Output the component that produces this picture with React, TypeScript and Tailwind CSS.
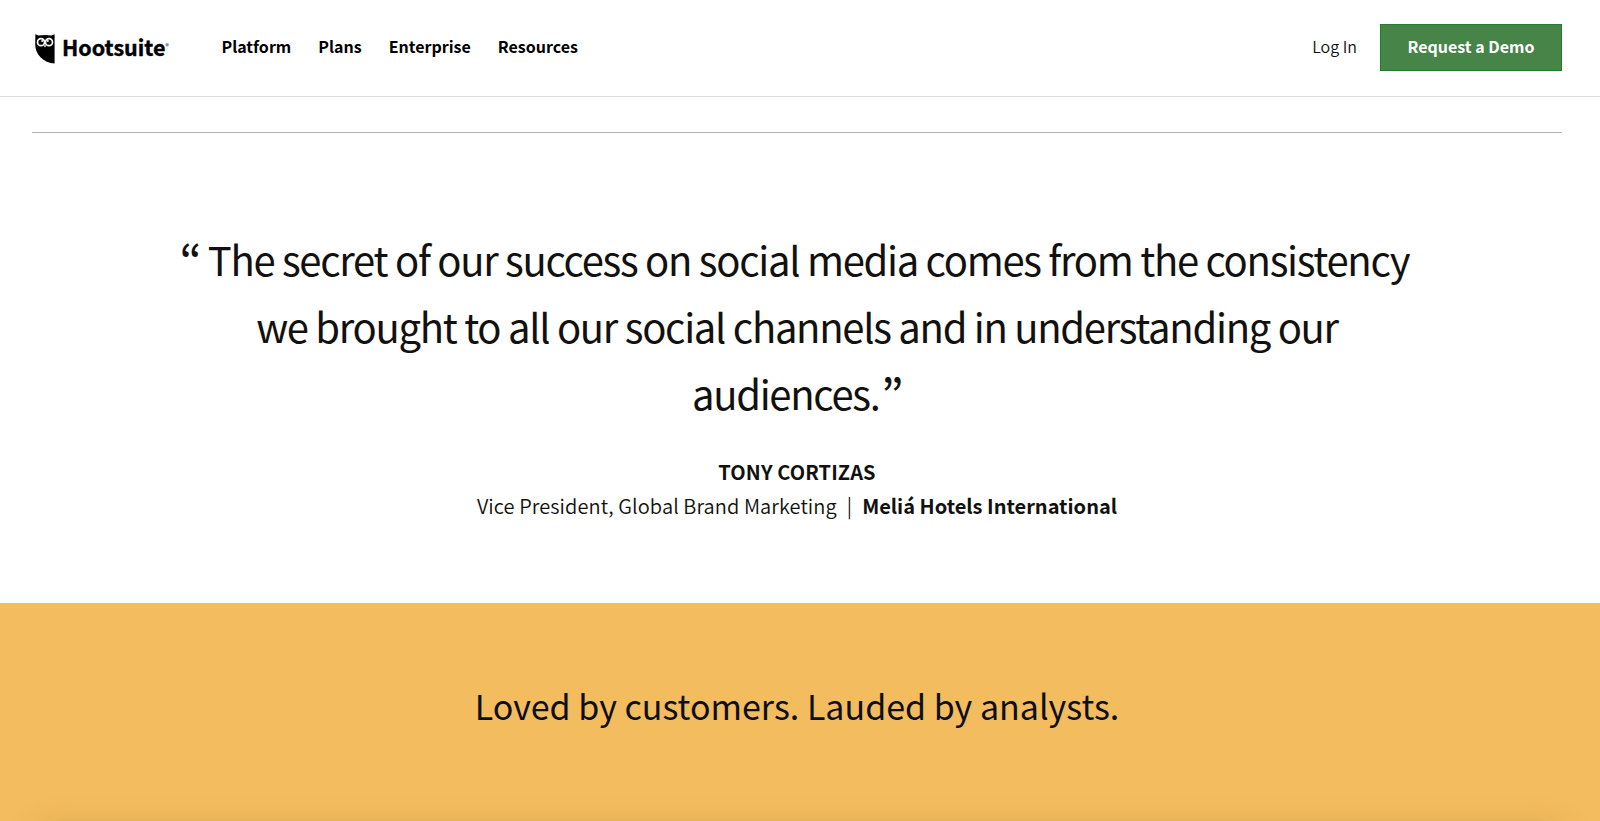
const navLinks = ["Platform", "Plans", "Enterprise", "Resources"];

const OwlLogo = () => (
  <svg width="20" height="30" viewBox="0 0 20 30" aria-hidden="true">
    <path
      d="M0.4 0.2 L3.4 1.5 Q10 0.3 16.6 1.5 L19.6 0.2 V29.6 C8.5 28.6 0.2 21 0.2 10 Z"
      fill="#000"
    />
    <circle cx="6" cy="8.2" r="3.5" fill="none" stroke="#fff" strokeWidth="1.7" />
    <circle cx="14" cy="8.2" r="3.5" fill="none" stroke="#fff" strokeWidth="1.7" />
    <circle cx="7.2" cy="6.9" r="1" fill="#fff" />
    <circle cx="12.8" cy="6.9" r="1" fill="#fff" />
    <path d="M10 10.4 L11 12 L10 13.6 L9 12 Z" fill="#fff" />
  </svg>
);

export default function App() {
  return (
    <div className="flex h-[821px] flex-col overflow-hidden bg-white text-[#12110f] font-['Noto_Sans_CJK_JP',sans-serif]">
      <header className="flex h-[97px] shrink-0 items-center border-b border-[#dedede] pr-[38px] pl-[35px]">
        <a className="flex w-[186.5px] items-center pt-0.5 text-black">
          <OwlLogo />
          <span className="-mt-1 ml-[7px] text-[21.5px] leading-none font-bold [-webkit-text-stroke:0.4px_#000]">
            Hootsuite
          </span>
          <span className="-mt-1.5 text-[7px]">®</span>
        </a>
        <nav className="-mt-1 flex gap-[27px] text-base font-bold text-black">
          {navLinks.map((link) => (
            <a key={link}>{link}</a>
          ))}
        </nav>
        <div className="-mt-0.5 ml-auto flex items-center gap-[23px]">
          <a className="pb-0.5 text-base font-[350]">Log In</a>
          <button
            type="button"
            className="h-[47px] w-[182px] border border-[#1f7f2b] bg-[#468547] pb-0.5 text-base font-bold text-white"
          >
            Request a Demo
          </button>
        </div>
      </header>

      <section className="mr-[38px] ml-8 mt-[35px] flex h-[471px] shrink-0 flex-col items-center border-t border-[#b5b2b2] pt-[93px] text-center">
        <blockquote className="w-[1260px] text-[40px] leading-[67px] tracking-[-1.3px]">
          <span className="text-[42px] leading-none font-medium">“</span> The
          secret of our success on social media comes from the{" "}
          <span className="mr-[5px]">consistency</span> we brought to all our
          social channels and in understanding our audiences.
          <span className="ml-0.5 text-[42px] leading-none font-medium">”</span>
        </blockquote>
        <p className="mt-7 text-xl leading-[34px] font-bold tracking-[0.1px] uppercase">
          Tony Cortizas
        </p>
        <p className="flex gap-[10px] text-xl leading-[33px] font-[350] tracking-[0.08px]">
          <span>Vice President, Global Brand Marketing</span>
          <span>|</span>
          <span className="font-bold tracking-normal">
            Meliá Hotels International
          </span>
        </p>
      </section>

      <section className="relative flex-1 bg-[#f3bc5e] pt-[78px] pr-1.5 text-center">
        <h2 className="text-[34px] leading-[50px] text-[#0d0f1a]">
          Loved by customers. Lauded by analysts.
        </h2>
        {/* top of the card shadow that starts below the fold */}
        <div className="absolute inset-x-10 -bottom-8 h-5 shadow-[0_0_32px_rgba(120,80,20,0.35)]" />
      </section>
    </div>
  );
}
